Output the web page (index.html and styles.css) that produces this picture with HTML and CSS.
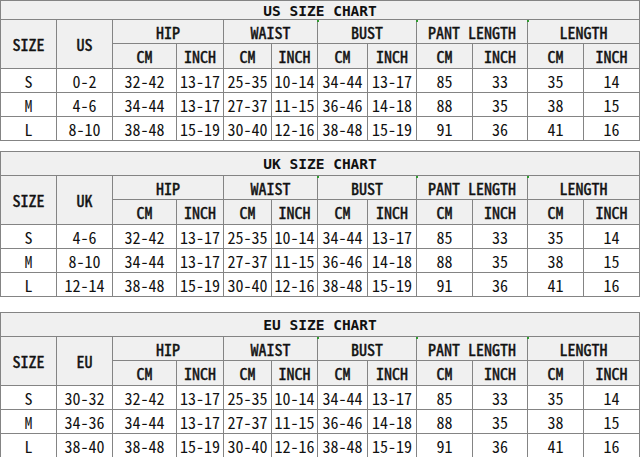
FILE: index.html
```html
<!DOCTYPE html>
<html>
<head>
<meta charset="utf-8">
<link rel="stylesheet" href="styles.css">
</head>
<body>
<div class="charts">
<table class="chart chart-us">
<colgroup><col class="c56"><col class="c56"><col class="c64"><col class="c47"><col class="c48"><col class="c46"><col class="c50"><col class="c49"><col class="c56"><col class="c55"><col class="c56"><col class="c56"></colgroup>
<tr class="title"><th colspan="12">US SIZE CHART</th></tr>
<tr class="h1"><th rowspan="2">SIZE</th><th rowspan="2">US</th><th colspan="2">HIP</th><th colspan="2">WAIST</th><th colspan="2" class="note">BUST</th><th colspan="2" class="note">PANT LENGTH</th><th colspan="2" class="note">LENGTH</th></tr>
<tr class="h2"><th>CM</th><th>INCH</th><th>CM</th><th>INCH</th><th>CM</th><th>INCH</th><th>CM</th><th>INCH</th><th>CM</th><th>INCH</th></tr>
<tr class="d"><td>S</td><td>0-2</td><td>32-42</td><td>13-17</td><td>25-35</td><td>10-14</td><td>34-44</td><td>13-17</td><td>85</td><td>33</td><td>35</td><td>14</td></tr>
<tr class="d"><td>M</td><td>4-6</td><td>34-44</td><td>13-17</td><td>27-37</td><td>11-15</td><td>36-46</td><td>14-18</td><td>88</td><td>35</td><td>38</td><td>15</td></tr>
<tr class="d"><td>L</td><td>8-10</td><td>38-48</td><td>15-19</td><td>30-40</td><td>12-16</td><td>38-48</td><td>15-19</td><td>91</td><td>36</td><td>41</td><td>16</td></tr>
</table>

<table class="chart chart-uk">
<colgroup><col class="c56"><col class="c56"><col class="c64"><col class="c47"><col class="c48"><col class="c46"><col class="c50"><col class="c49"><col class="c56"><col class="c55"><col class="c56"><col class="c56"></colgroup>
<tr class="title"><th colspan="12">UK SIZE CHART</th></tr>
<tr class="h1"><th rowspan="2">SIZE</th><th rowspan="2">UK</th><th colspan="2">HIP</th><th colspan="2">WAIST</th><th colspan="2" class="note">BUST</th><th colspan="2" class="note">PANT LENGTH</th><th colspan="2" class="note">LENGTH</th></tr>
<tr class="h2"><th>CM</th><th>INCH</th><th>CM</th><th>INCH</th><th>CM</th><th>INCH</th><th>CM</th><th>INCH</th><th>CM</th><th>INCH</th></tr>
<tr class="d"><td>S</td><td>4-6</td><td>32-42</td><td>13-17</td><td>25-35</td><td>10-14</td><td>34-44</td><td>13-17</td><td>85</td><td>33</td><td>35</td><td>14</td></tr>
<tr class="d"><td>M</td><td>8-10</td><td>34-44</td><td>13-17</td><td>27-37</td><td>11-15</td><td>36-46</td><td>14-18</td><td>88</td><td>35</td><td>38</td><td>15</td></tr>
<tr class="d"><td>L</td><td>12-14</td><td>38-48</td><td>15-19</td><td>30-40</td><td>12-16</td><td>38-48</td><td>15-19</td><td>91</td><td>36</td><td>41</td><td>16</td></tr>
</table>

<table class="chart chart-eu">
<colgroup><col class="c56"><col class="c56"><col class="c64"><col class="c47"><col class="c48"><col class="c46"><col class="c50"><col class="c49"><col class="c56"><col class="c55"><col class="c56"><col class="c56"></colgroup>
<tr class="title"><th colspan="12">EU SIZE CHART</th></tr>
<tr class="h1"><th rowspan="2">SIZE</th><th rowspan="2">EU</th><th colspan="2">HIP</th><th colspan="2">WAIST</th><th colspan="2" class="note">BUST</th><th colspan="2" class="note">PANT LENGTH</th><th colspan="2" class="note">LENGTH</th></tr>
<tr class="h2"><th>CM</th><th>INCH</th><th>CM</th><th>INCH</th><th>CM</th><th>INCH</th><th>CM</th><th>INCH</th><th>CM</th><th>INCH</th></tr>
<tr class="d"><td>S</td><td>30-32</td><td>32-42</td><td>13-17</td><td>25-35</td><td>10-14</td><td>34-44</td><td>13-17</td><td>85</td><td>33</td><td>35</td><td>14</td></tr>
<tr class="d"><td>M</td><td>34-36</td><td>34-44</td><td>13-17</td><td>27-37</td><td>11-15</td><td>36-46</td><td>14-18</td><td>88</td><td>35</td><td>38</td><td>15</td></tr>
<tr class="d"><td>L</td><td>38-40</td><td>38-48</td><td>15-19</td><td>30-40</td><td>12-16</td><td>38-48</td><td>15-19</td><td>91</td><td>36</td><td>41</td><td>16</td></tr>
</table>
</div>
</body>
</html>
```

FILE: styles.css
```css
html, body {
  margin: 0;
  padding: 0;
  background: #ffffff;
}

body {
  font-family: "Noto Sans Mono CJK SC", "DejaVu Sans Mono", monospace;
  font-size: 16px;
  color: #111111;
}

.charts {
  display: flex;
  flex-direction: column;
  width: 640px;
}

.chart {
  border-collapse: collapse;
  table-layout: fixed;
  width: 640px;
}

.chart-uk { margin-top: 10px; }
.chart-eu { margin-top: 15px; }

.c56 { width: 56px; }
.c64 { width: 64px; }
.c47 { width: 47px; }
.c48 { width: 48px; }
.c46 { width: 46px; }
.c50 { width: 50px; }
.c49 { width: 49px; }
.c55 { width: 55px; }

.chart th,
.chart td {
  border: 1px solid #848484;
  padding: 0;
  text-align: center;
  vertical-align: middle;
  line-height: 16px;
  white-space: nowrap;
}

.chart th {
  background: #f0f0f0;
  font-weight: normal;
  color: #111111;
  -webkit-text-stroke: 0.45px #111111;
}

.chart td {
  background: #ffffff;
  font-weight: normal;
}

.title { height: 24px; }
.chart-us .title { height: 19px; }
.title th {
  font-family: "DejaVu Sans Mono", monospace;
  font-size: 14.5px;
  font-weight: bold;
  -webkit-text-stroke: 0;
}
.chart-us .title th {
  line-height: 16px;
  padding-top: 2px;
}

.h1 { height: 24px; }
.h2 { height: 25px; }
.d { height: 24px; }

.note { position: relative; }
.note::before {
  content: "";
  position: absolute;
  left: -1px;
  top: 0;
  width: 2px;
  height: 2px;
  background: #2e9a2e;
}
```
